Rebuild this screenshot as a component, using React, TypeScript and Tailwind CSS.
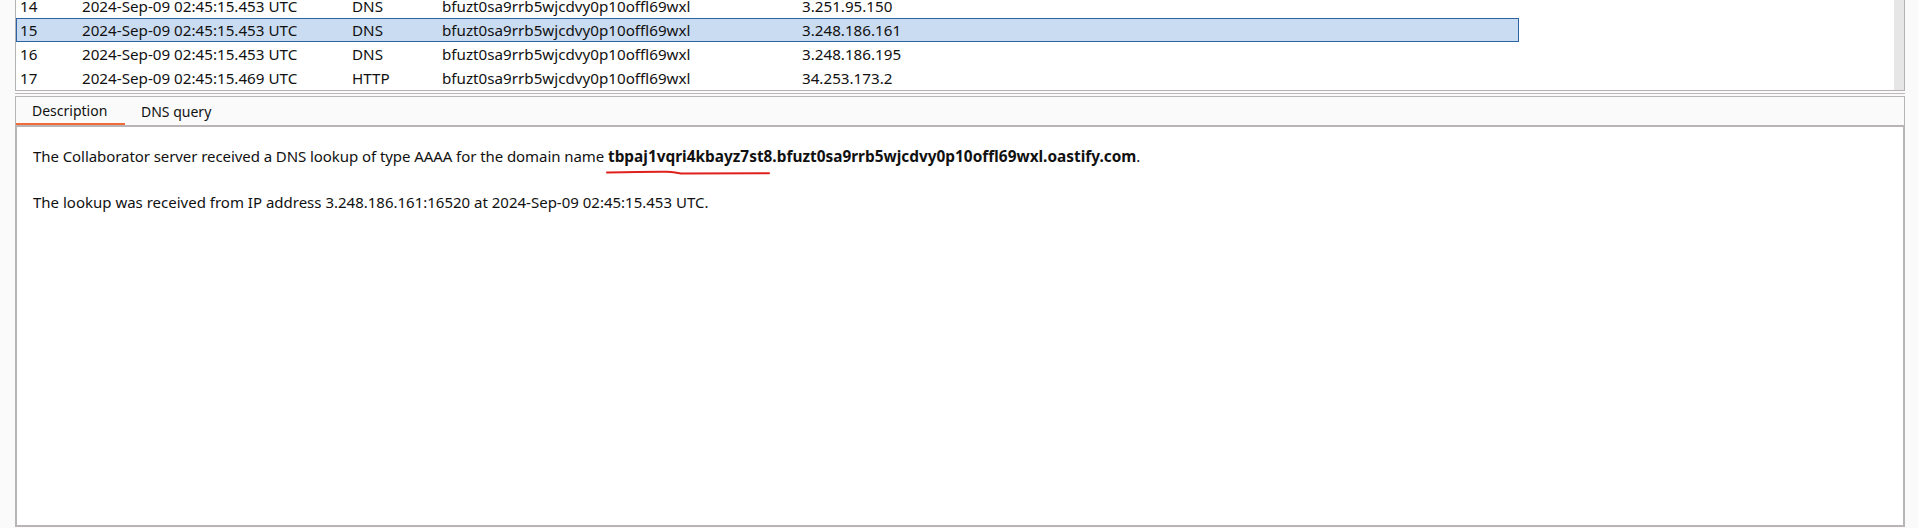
import React from "react"

const rows = [
  { id: "14", time: "2024-Sep-09 02:45:15.453 UTC", type: "DNS", payload: "bfuzt0sa9rrb5wjcdvy0p10offl69wxl", ip: "3.251.95.150" },
  { id: "15", time: "2024-Sep-09 02:45:15.453 UTC", type: "DNS", payload: "bfuzt0sa9rrb5wjcdvy0p10offl69wxl", ip: "3.248.186.161", selected: true },
  { id: "16", time: "2024-Sep-09 02:45:15.453 UTC", type: "DNS", payload: "bfuzt0sa9rrb5wjcdvy0p10offl69wxl", ip: "3.248.186.195" },
  { id: "17", time: "2024-Sep-09 02:45:15.469 UTC", type: "HTTP", payload: "bfuzt0sa9rrb5wjcdvy0p10offl69wxl", ip: "34.253.173.2" },
]

const Row = ({ row }: any) => (
  <div
    className={`grid grid-cols-[62px_270px_90px_360px_1fr] w-[1503px] h-[24px] items-center border text-[15.2px] ${
      row.selected ? "bg-[#cadcf1] border-[#2b63a5]" : "border-transparent"
    }`}
  >
    <span className="pl-[3px]">{row.id}</span>
    <span className="pl-[3px]">{row.time}</span>
    <span className="pl-[3px]">{row.type}</span>
    <span className="pl-[3px]">{row.payload}</span>
    <span className="pl-[3px]">{row.ip}</span>
  </div>
)

export default function App() {
  return (
    <div className="w-[1918px] h-[528px] bg-[#fafafa] overflow-hidden font-['Noto_Sans','Open_Sans',sans-serif] text-[14px] text-[#111]">
      <div className="ml-[15px] w-[1890px] h-[91px] flex bg-white border-x border-b border-[#b6b2b2] overflow-hidden">
        <div className="flex-1 -mt-[6px]">
          {rows.map((r) => (
            <Row key={r.id} row={r} />
          ))}
        </div>
        <div className="w-[10px] bg-[#e6e6e6]" />
      </div>

      <div className="ml-[15px] w-[1890px] mt-[2px] h-px bg-[#bdb9b9]" />

      <div className="ml-[15px] mt-[2px] w-[1890px] h-[431px] border border-[#b9b5b5] flex flex-col">
        <div className="h-[28px] flex">
          <div className="w-[109px] pl-[16px] flex items-center border-b-2 border-[#f26b3a]">
            Description
          </div>
          <div className="pl-[16px] flex items-center">DNS query</div>
        </div>
        <div className="flex-1 bg-white border-t-2 border-x border-b border-[#b9b5b5] pl-[16px] pt-[18px] text-[15px]">
          <p className="leading-[22px] tracking-[-0.07px]">
            The Collaborator server received a DNS lookup of type AAAA for the domain name{" "}
            <span className="relative font-bold text-[15.4px] tracking-normal">
              tbpaj1vqri4kbayz7st8.bfuzt0sa9rrb5wjcdvy0p10offl69wxl.oastify.com
              <svg
                className="absolute left-[-3px] top-[23px]"
                width="168"
                height="8"
                viewBox="0 0 168 8"
              >
                <path
                  d="M2 3.4 Q 40 2.6 62 2.7 Q 68 2.8 76 4.6 L 164 4.3"
                  fill="none"
                  stroke="#e0201c"
                  strokeWidth="2"
                  strokeLinecap="round"
                />
              </svg>
            </span>
            .
          </p>
          <p className="leading-[22px] mt-[23px]">
            The lookup was received from IP address 3.248.186.161:16520 at 2024-Sep-09 02:45:15.453 UTC.
          </p>
        </div>
      </div>
    </div>
  )
}
